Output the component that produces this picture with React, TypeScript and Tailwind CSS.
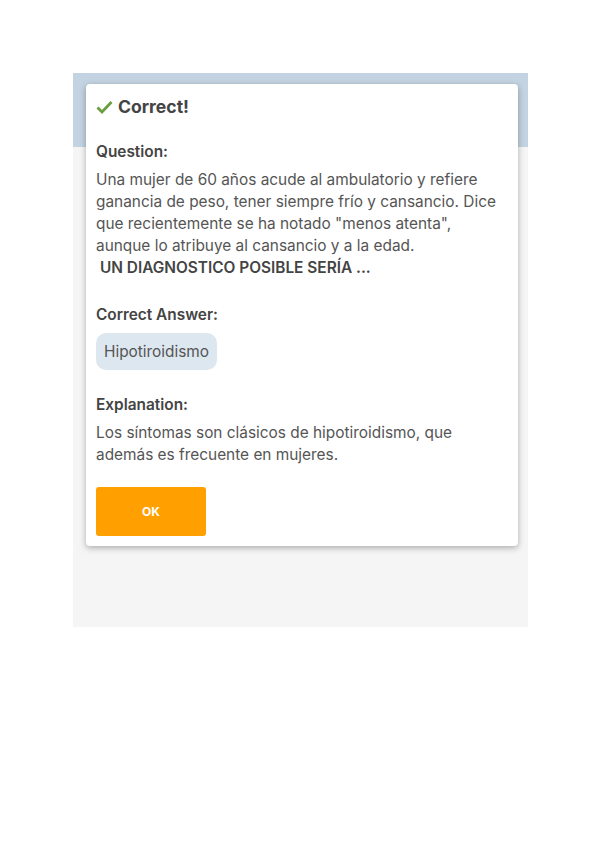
import React from "react";

export default function App() {
  return (
    <div className="w-[600px] h-[848px] bg-white pt-[73px] pl-[73px]" style={{ fontFamily: "Inter, 'Liberation Sans', sans-serif" }}>
      <div className="w-[455px] h-[554px] bg-[#f5f5f5] flex flex-col">
        <div className="h-[74px] bg-[#c3d3e1] shrink-0" />
        <div className="-mt-[63px] mx-[13px] w-[432px] bg-white rounded-[4px] shadow-[0_2px_6px_rgba(0,0,0,0.3)] px-[10px] pt-[12px] pb-[10px] text-[#555]">
          <div className="flex items-center gap-[5px] h-[22px]">
            <svg width="17" height="14" viewBox="0 0 17 14">
              <path d="M1.5 7.5 L6 12 L15.5 2" fill="none" stroke="#6a9e3f" strokeWidth="2.8" />
            </svg>
            <span className="text-[17.6px] font-bold text-[#444]">Correct!</span>
          </div>
          <div className="mt-[23px] text-[15.4px] font-semibold text-[#444] leading-[22px]">Question:</div>
          <div className="mt-[6px] text-[15.4px] leading-[22px]">
            Una mujer de 60 años acude al ambulatorio y refiere ganancia de peso, tener siempre frío y cansancio. Dice que recientemente se ha notado "menos atenta", aunque lo atribuye al cansancio y a la edad.
            <br />
            <b className="text-[#444] font-semibold">&nbsp;UN DIAGNOSTICO POSIBLE SERÍA ...</b>
          </div>
          <div className="mt-[25px] text-[15.4px] font-semibold text-[#444] leading-[22px]">Correct Answer:</div>
          <div className="mt-[7px] inline-flex items-center h-[37px] px-[8px] rounded-[10px] bg-[#dde7f0] text-[15.4px]">Hipotiroidismo</div>
          <div className="mt-[24px] text-[15.4px] font-semibold text-[#444] leading-[22px]">Explanation:</div>
          <div className="mt-[6px] text-[15.4px] leading-[22px]">
            Los síntomas son clásicos de hipotiroidismo, que además es frecuente en mujeres.
          </div>
          <button className="mt-[21px] w-[110px] h-[49px] bg-[#ffa000] rounded-[3px] text-white text-[12px] font-bold">OK</button>
        </div>
      </div>
    </div>
  );
}
